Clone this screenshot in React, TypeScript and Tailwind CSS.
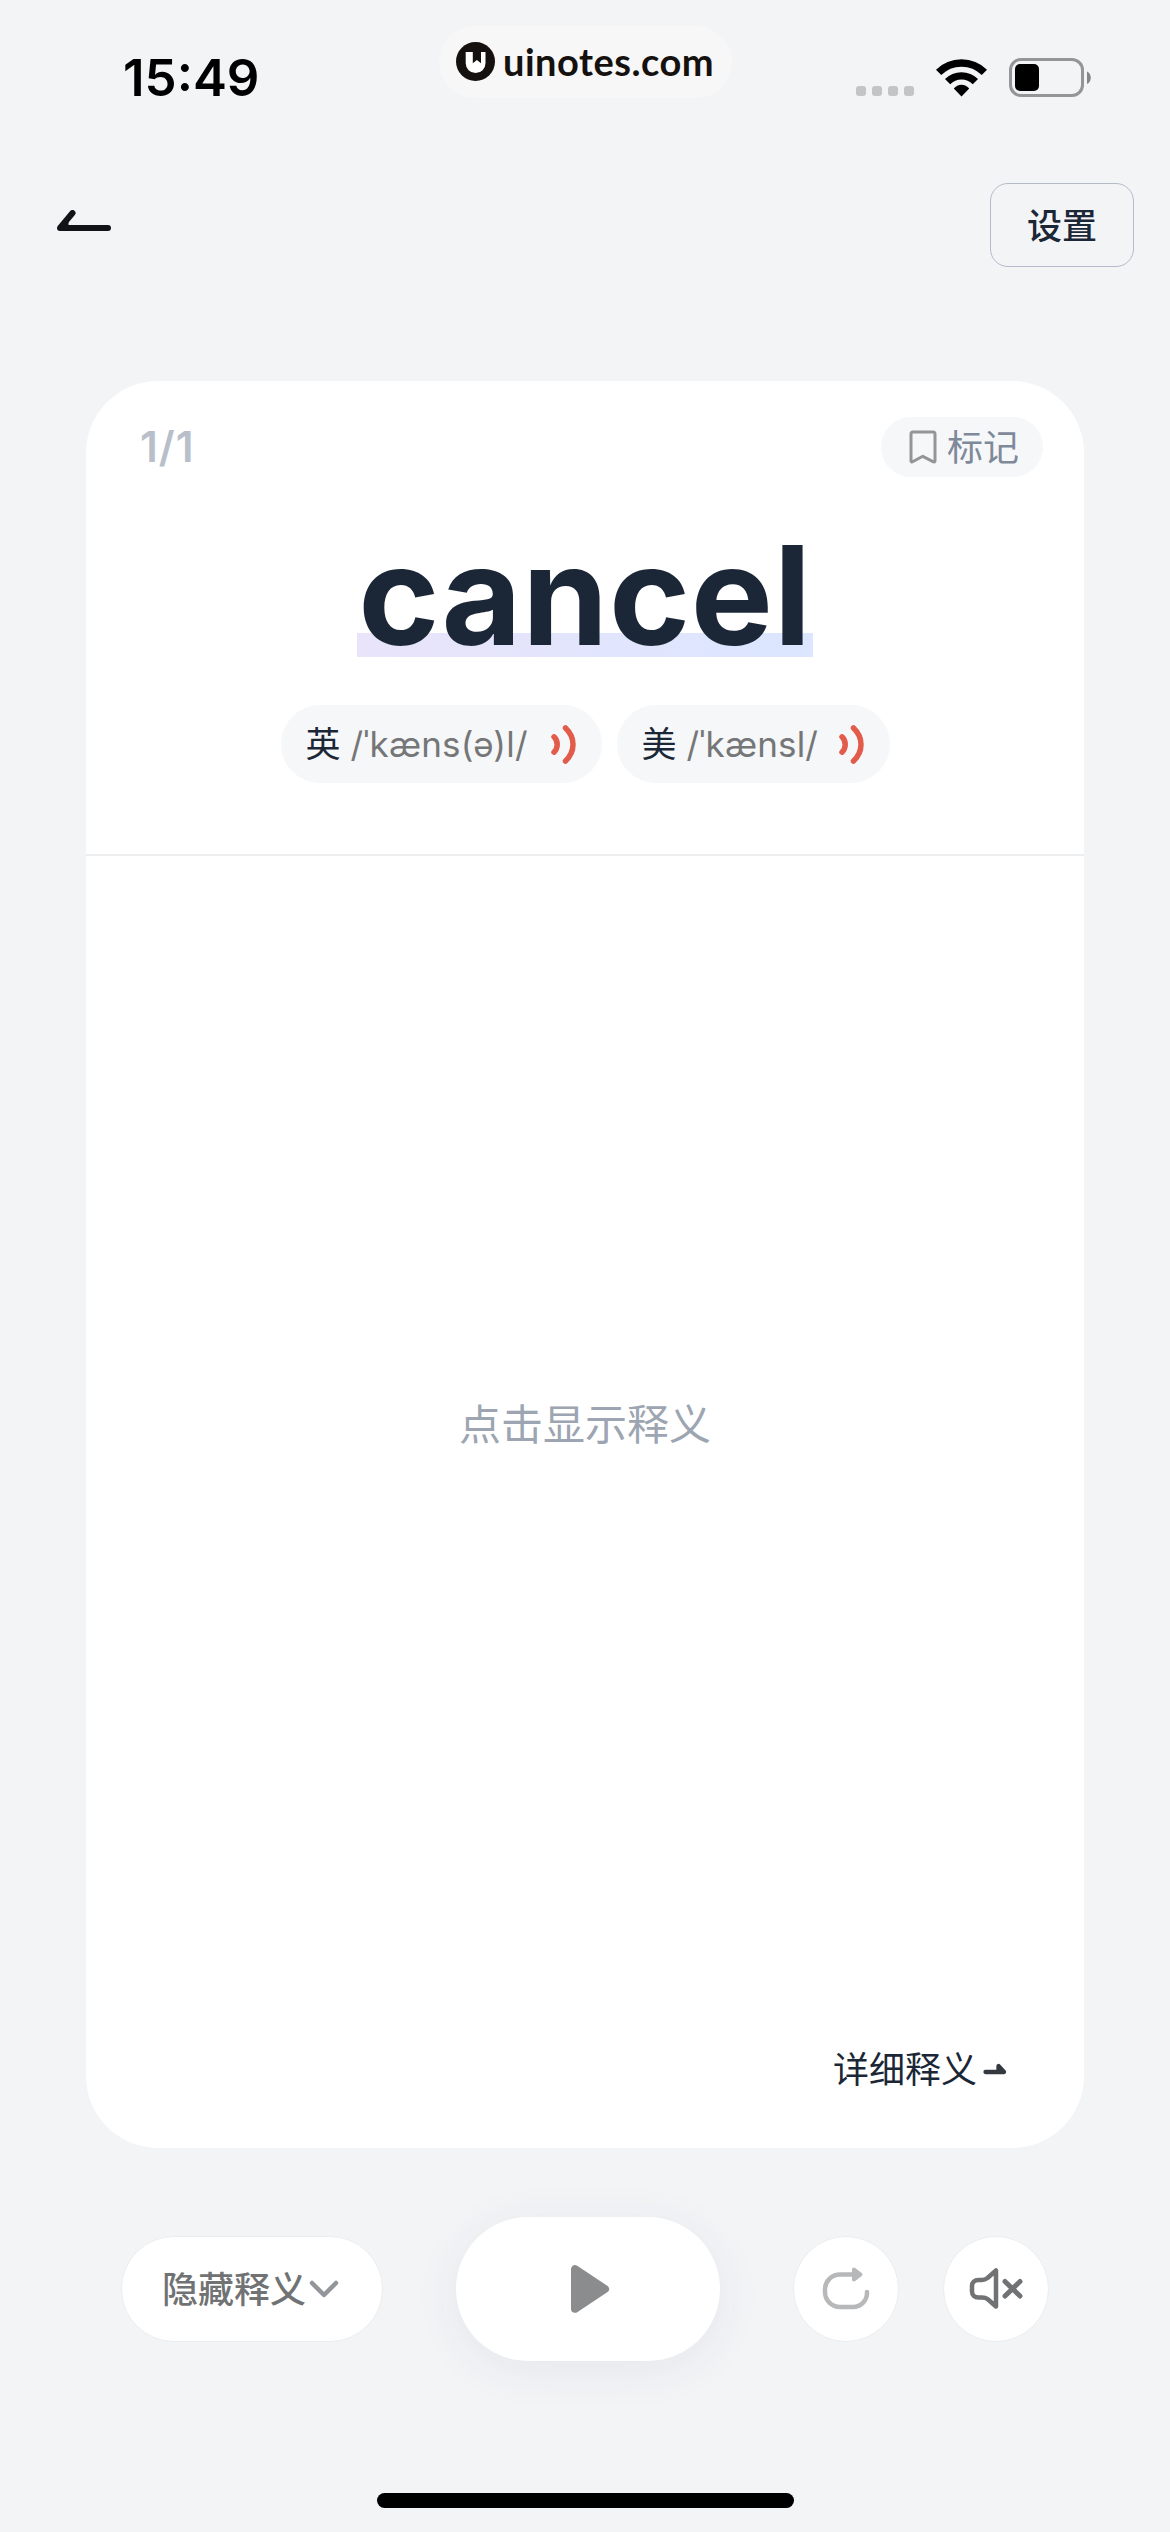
import React from 'react';

const PRONUNCIATIONS = [
  { id: 'uk', label: '英', ipa: "/ˈkæns(ə)l/", width: 'w-[321px]', ipaWidth: 'w-[200px]' },
  { id: 'us', label: '美', ipa: "/ˈkænsl/", width: 'w-[273px]', ipaWidth: 'w-[152px]' },
];

const StatusBar: React.FC = () => (
  <div className="flex h-[156px] items-start">
    <div className="w-[439px] pl-[123px] pt-[47px] text-[51px] leading-[62px] font-semibold text-black">
      15:49
    </div>
    <div className="mt-[26px] flex h-[72px] w-[293px] items-start rounded-full bg-[#f7f7f7] pl-[17px] pt-[16px]">
      <svg width="39" height="39" viewBox="0 0 39 39" className="shrink-0">
        <circle cx="19.5" cy="19.5" r="19.5" fill="#15110f" />
        <path d="M9.7 10H29.500V21.200a9.900 9.900 0 0 1-19.800 0z" fill="#fff" />
        <path d="M16.800 9v12.300l4.100-3.200 4.100 3.200V9z" fill="#15110f" />
      </svg>
      <span className="-mt-[5px] ml-[8px] text-[38px] leading-[48px] font-bold tracking-[0.5px] text-[#15110f] font-['Lato',sans-serif]">uinotes.com</span>
    </div>
    <div className="ml-[124px] mt-[86px] flex gap-[6px]">
      {[0, 1, 2, 3].map((i) => (
        <div key={i} className="h-[10px] w-[10px] rounded-[3px] bg-[#c3c4c5]" />
      ))}
    </div>
    <svg width="51" height="38" viewBox="0 0 51 38" className="ml-[22px] mt-[58.5px]" fill="none" stroke="#000">
      <path d="M2.6 13.4A32.5 32.5 0 0 1 48.4 13.4" strokeWidth="7.4" />
      <path d="M11.6 22.7A19.6 19.6 0 0 1 39.4 22.7" strokeWidth="7.4" />
      <path d="M17.800 29.600a9.800 9.800 0 0 1 15.400 0l-7.700 7.900z" fill="#000" stroke="none" />
    </svg>
    <svg width="84" height="40" viewBox="0 0 84 40" className="ml-[22px] mt-[58px]">
      <rect x="1.5" y="1.5" width="72" height="36" rx="10.5" fill="none" stroke="#949596" strokeWidth="3" />
      <rect x="6" y="6" width="24" height="27" rx="5" fill="#000" />
      <path d="M78 13.5c5 2 5 10.500 0 12.500z" fill="#858687" />
    </svg>
  </div>
);

const Header: React.FC = () => (
  <div className="flex h-[225px] items-start justify-between pl-[57px] pr-[36px] pt-[27px]">
    <svg width="54" height="22" viewBox="0 0 54 22" className="mt-[27px]" fill="none" stroke="#111416" strokeWidth="6" strokeLinecap="round" strokeLinejoin="round">
      <path d="M51 18H3L15.500 3" />
      <path d="M3 18h8V11z" fill="#111416" strokeWidth="1" />
    </svg>
    <button className="flex h-[84px] w-[144px] items-center justify-center rounded-[18px] border border-[#b4bac8] pt-[2px] text-[35px] font-medium text-[#1b2736]">
      设置
    </button>
  </div>
);

const SoundWave: React.FC = () => (
  <svg width="25" height="39" viewBox="0 0 25 39" fill="none" stroke="#e35b4b" strokeWidth="5.500" strokeLinecap="round">
    <path d="M3 11.800c4.300 4.200 4.300 11.200 0 15.400" />
    <path d="M14.500 3c10 9.500 10 23.500 0 33" />
  </svg>
);

const WordCard: React.FC = () => (
  <div className="mx-[86px] flex h-[1767px] flex-col rounded-[72px] bg-white">
    <div className="flex h-[475px] flex-col items-center border-b-2 border-[#eceef0]">
      <div className="flex w-full items-start justify-between pl-[54px] pr-[41px] pt-[36px]">
        <span className="mt-[5px] text-[42px] leading-[50px] font-semibold tracking-[1px] text-[#b8bfca]">1/1</span>
        <button className="flex h-[60px] w-[162px] items-center rounded-full bg-[#f6f7f9] pl-[28px] text-[36px] text-[#7e8999]">
          <svg width="28" height="34" viewBox="0 0 28 34" className="mr-[10px]" fill="none" stroke="#949596" strokeWidth="3" strokeLinejoin="round">
            <path d="M3.500 2h20.500a2 2 0 0 1 2 2v27a1 1 0 0 1-1.500 .8L13.800 26.300 3.500 31.800A1 1 0 0 1 2 31V4a2 2 0 0 1 1.500-2z" />
          </svg>
          <span className="pt-[2px]">标记</span>
        </button>
      </div>
      <h1 className="mt-[36px] h-[144px] w-[456px] bg-linear-to-r from-[#e9e4fa] to-[#dbe6ff] bg-[length:100%_24px] bg-bottom bg-no-repeat text-center text-[138px] leading-[163px] font-bold tracking-[0.7px] whitespace-nowrap text-[#1b2736] [font-optical-sizing:none]">
        cancel
      </h1>
      <div className="mt-[48px] flex gap-[15px]">
        {PRONUNCIATIONS.map((item) => (
          <button key={item.id} className={`flex h-[78px] items-center rounded-full bg-[#f6f7f9] pl-[25px] text-[35px] whitespace-nowrap ${item.width}`}>
            <span className="w-[45px] text-left text-[#1b2736]">{item.label}</span>
            <span className={`text-left tracking-[0.15px] text-[#757677] ${item.ipaWidth}`}>{item.ipa}</span>
            <SoundWave />
          </button>
        ))}
      </div>
    </div>
    <div className="flex flex-1 items-center justify-center pb-[8px]">
      <span className="mt-[-44px] text-[42px] text-[#9ca5b1]">点击显示释义</span>
    </div>
    <div className="flex items-center justify-end pr-[77px] pb-[52px] text-[36px] leading-[52px] text-[#1b2736]">
      详细释义
      <svg width="24" height="12" viewBox="0 0 24 12" className="mb-[2px] ml-[6px]" fill="none" stroke="#343940" strokeWidth="4.300" strokeLinecap="round" strokeLinejoin="round">
        <path d="M2.500 9H21L15.500 3V9" fill="#343940" />
      </svg>
    </div>
  </div>
);

const Controls: React.FC = () => (
  <div className="flex h-[282px] items-center pl-[121px]">
    <button className="flex h-[106px] w-[262px] items-center rounded-full border border-[#ecedee] bg-white pl-[40px] text-[36px] font-medium text-[#707273]">
      <span className="pt-[2px]">隐藏释义</span>
      <svg width="30" height="22" viewBox="0 0 30 22" className="ml-[3px]" fill="none" stroke="#929599" strokeWidth="4.500" strokeLinecap="round" strokeLinejoin="round">
        <path d="M3 5 15 17 27 5" />
      </svg>
    </button>
    <button className="ml-[73px] flex h-[144px] w-[264px] items-center justify-center rounded-full bg-white shadow-[0_8px_48px_rgba(60,50,90,0.07)]">
      <svg width="40" height="50" viewBox="0 0 40 50" className="ml-[4px]" fill="#8b8c8d" stroke="#8b8c8d" strokeWidth="8" strokeLinejoin="round">
        <path d="M5 5.200V44.800L35 25z" />
      </svg>
    </button>
    <button className="ml-[73px] flex h-[106px] w-[106px] items-center justify-center rounded-full border border-[#ecedee] bg-white">
      <svg width="48" height="44" viewBox="0 0 48 44" className="mt-[-2px]" fill="none" stroke="#b6b8b9" strokeWidth="4.500" strokeLinecap="round" strokeLinejoin="round">
        <path d="M32 8.500H18A15 15 0 0 0 3 23.500V26A15 15 0 0 0 18 41H31A14 14 0 0 0 45 27V26" />
        <path d="M32 3.500V13.500L38.500 8.500z" fill="#b6b8b9" strokeWidth="4" />
      </svg>
    </button>
    <button className="ml-[44px] flex h-[106px] w-[106px] items-center justify-center rounded-full border border-[#ecedee] bg-white">
      <svg width="54" height="42" viewBox="0 0 54 42" fill="none" stroke="#707273" strokeWidth="4.500" strokeLinecap="round" strokeLinejoin="round">
        <path d="M27 2.500V38.500L18.500 31C16.500 29.500 15 29.500 13 29.500H9.500C5.500 29.500 3 27 3 23.500V18C3 14.500 5.500 12 9.500 12H13C15 12 16.500 11.500 18.500 10z" />
        <path d="M36 13.500 51 28M51 13.500 36 28" strokeWidth="5" />
      </svg>
    </button>
  </div>
);

export default function App() {
  return (
    <div className="flex h-[2532px] w-[1170px] flex-col overflow-hidden bg-[#f2f4f6] font-['Inter','Noto_Sans_CJK_SC',sans-serif]">
      <StatusBar />
      <Header />
      <WordCard />
      <Controls />
      <div className="mx-auto mt-[63px] h-[15px] w-[417px] rounded-full bg-black" />
    </div>
  );
}
